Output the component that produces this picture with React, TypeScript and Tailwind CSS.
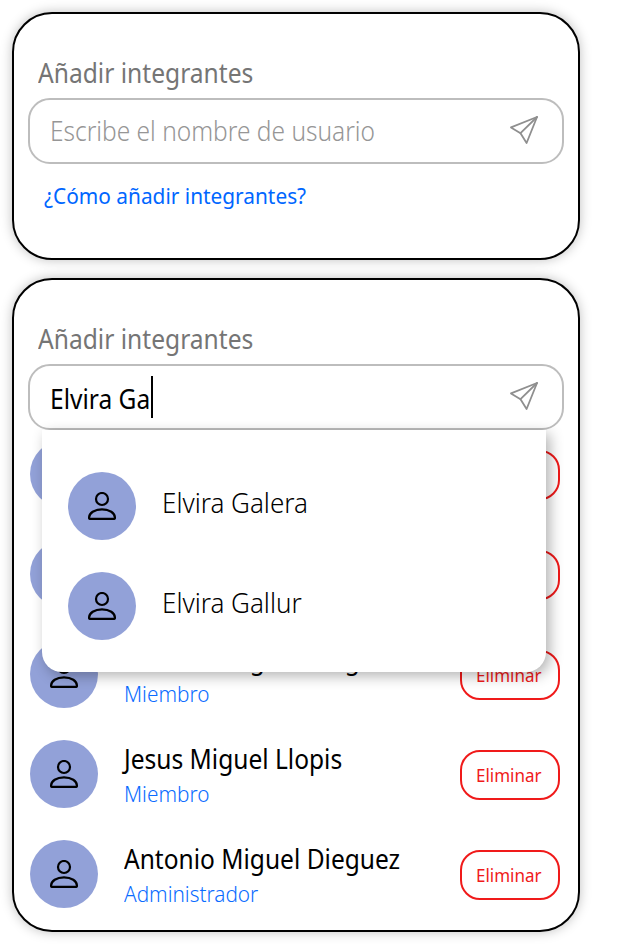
import React from "react";

function SendIcon() {
  return (
    <svg width="28" height="28" viewBox="0 0 28 28" fill="none" stroke="#8f8f8f" strokeWidth="1.8" strokeLinejoin="round" strokeLinecap="round">
      <path d="M27 1 1 11.400l9.500 5.800L16.600 27z" />
      <path d="M27 1 10.500 17.200" />
    </svg>
  );
}

function Avatar() {
  return (
    <div className="flex size-17 shrink-0 items-center justify-center rounded-full bg-[#92a1d8]">
      <svg width="28" height="28" viewBox="0 0 28 28" fill="none" stroke="#000" strokeWidth="2.2" strokeLinejoin="round">
        <circle cx="14" cy="7" r="6" />
        <path d="M2.200 26.950C1.400 26.950 1.050 26.600 1.050 25.800 1.050 21 6.500 17.300 14 17.300s12.950 3.700 12.950 8.500c0 .8-.350 1.150-1.150 1.150z" />
      </svg>
    </div>
  );
}

function Field({ children }: { children: React.ReactNode }) {
  return (
    <div className="flex h-[66px] items-center justify-between rounded-[22px] border-2 border-[#bdbdbd] pr-6 pl-5">
      {children}
      <span className="-mt-0.5">
        <SendIcon />
      </span>
    </div>
  );
}

function Narrow({ className = "scale-x-[0.944]", children }: { className?: string; children: React.ReactNode }) {
  return <span className={`inline-block origin-left whitespace-nowrap ${className}`}>{children}</span>;
}

function Card({ className, children }: { className: string; children: React.ReactNode }) {
  return (
    <section className={`w-[568px] rounded-[40px] border-2 border-black bg-white px-3.5 pt-10 shadow-[0_0_12px_rgba(0,0,0,0.25)] ${className}`}>
      <h2 className="mb-2 h-9 pl-2.5 text-[26.5px] leading-[38px] text-[#757575]">
        <Narrow className="scale-x-[0.928]">Añadir integrantes</Narrow>
      </h2>
      {children}
    </section>
  );
}

function Member({ name, role }: { name: string; role: string }) {
  return (
    <li className="flex h-17">
      <Avatar />
      <div className="ml-[26px] flex-1">
        <p className="h-[37px] text-[26.5px] leading-[38px]">
          <Narrow className="scale-x-[0.926]">{name}</Narrow>
        </p>
        <p className="text-[22px] leading-8 font-light text-[#0a6cff]">
          <Narrow>{role}</Narrow>
        </p>
      </div>
      <button className="mt-2.5 h-[50px] w-[100px] rounded-[20px] border-2 border-[#f01a1a] bg-white pl-3.5 text-left text-[18px] text-[#f01a1a]">
        <Narrow>Eliminar</Narrow>
      </button>
    </li>
  );
}

const members = [
  { name: "", role: "" },
  { name: "", role: "" },
  { name: "Antonio Miguel Dieguez", role: "Miembro" },
  { name: "Jesus Miguel Llopis", role: "Miembro" },
  { name: "Antonio Miguel Dieguez", role: "Administrador" },
];

export default function App() {
  return (
    <main className="flex h-[944px] w-[620px] flex-col gap-[18px] overflow-hidden bg-white pt-3 pl-3 font-['Noto_Sans',sans-serif] text-black">
      <Card className="h-[248px]">
        <Field>
          <span className="text-[27px] leading-9 font-light text-[#969696]">
            <Narrow className="scale-x-[0.907]">Escribe el nombre de usuario</Narrow>
          </span>
        </Field>
        <a className="mt-[15px] block pl-4 text-[22px] leading-8 text-[#0066ff]">
          <Narrow className="scale-x-[0.947]">¿Cómo añadir integrantes?</Narrow>
        </a>
      </Card>
      <Card className="h-[654px]">
        <div className="relative">
          <Field>
            <span className="flex items-center text-[26.5px] leading-9">
              <span className="w-[101px] pt-[3px]">
                <Narrow className="scale-x-[0.926]">Elvira Ga</Narrow>
              </span>
              <span className="h-[42px] w-0.5 bg-black" />
            </span>
          </Field>
          <ul className="absolute top-[66px] left-3.5 z-10 flex h-[242px] w-[504px] flex-col gap-8 rounded-b-[20px] bg-white pt-[42px] pl-[26px] shadow-[4px_4px_14px_rgba(0,0,0,0.3)]">
            {["Elvira Galera", "Elvira Gallur"].map((name) => (
              <li key={name} className="flex h-17">
                <Avatar />
                <span className="ml-[26px] text-[27px] leading-[62px] font-light">
                  <Narrow className="scale-x-[0.963]">{name}</Narrow>
                </span>
              </li>
            ))}
          </ul>
        </div>
        <ul className="mt-2.5 flex flex-col gap-8 pr-1 pl-0.5">
          {members.map((m, i) => (
            <Member key={i} name={m.name} role={m.role} />
          ))}
        </ul>
      </Card>
    </main>
  );
}
